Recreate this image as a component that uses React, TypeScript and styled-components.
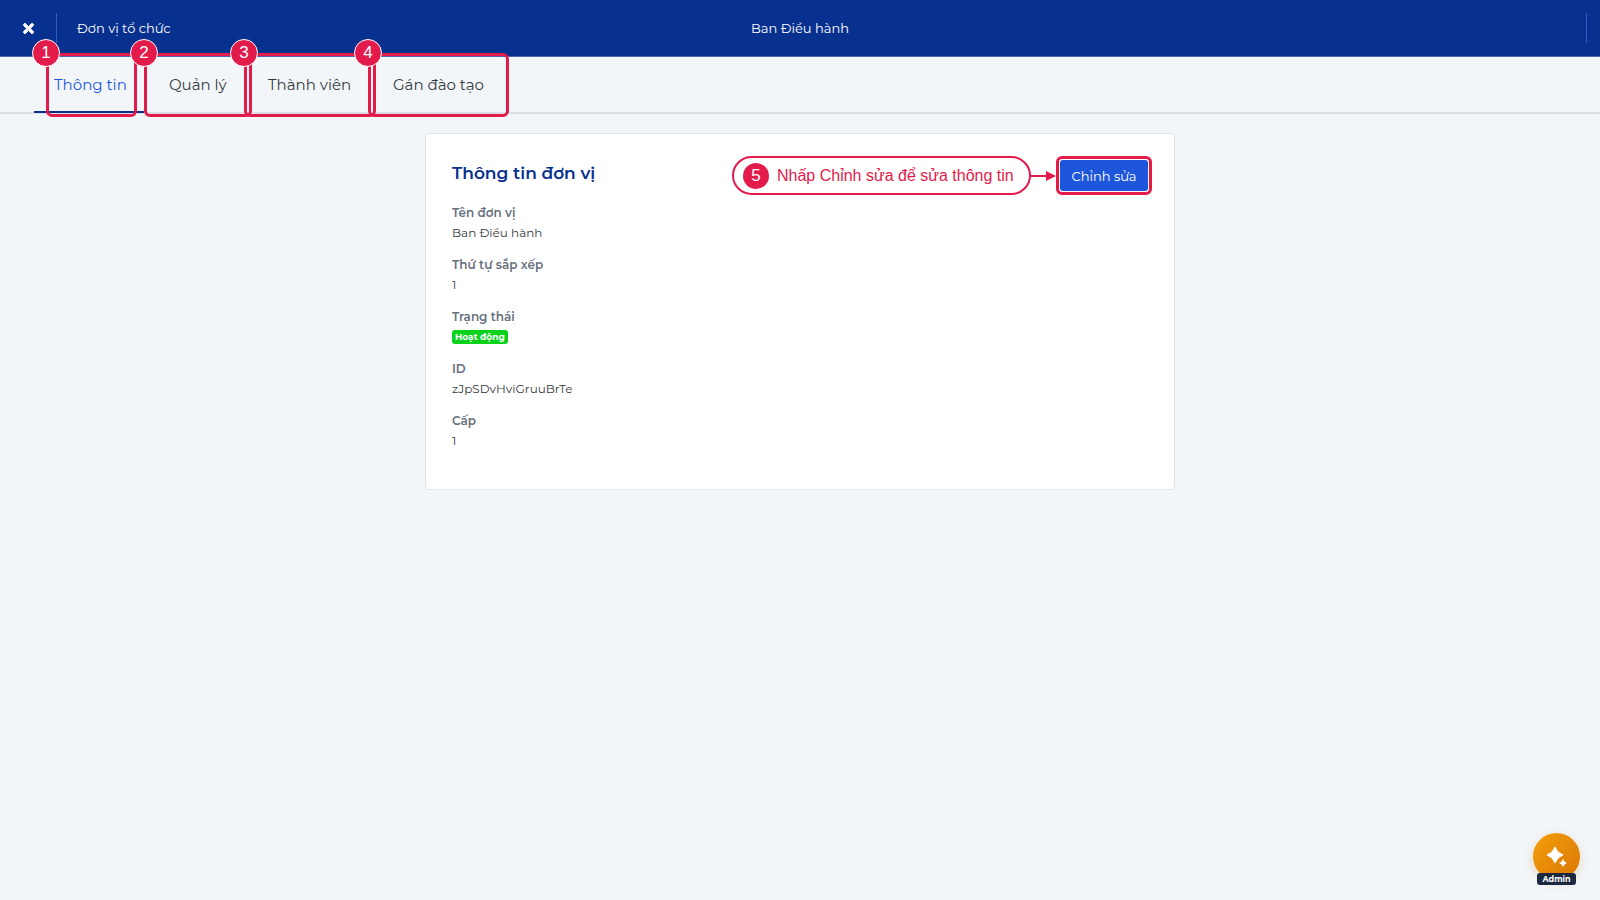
import React from "react";
import styled, { createGlobalStyle } from "styled-components";
import { FaTimes } from "react-icons/fa";

const GlobalStyle = createGlobalStyle`
  *, *::before, *::after { box-sizing: border-box; }
  body {
    margin: 0;
    background: #f2f6f9;
    color: #343a40;
    font-family: Montserrat, Inter, "Noto Sans", sans-serif;
    font-size: 13px;
  }
  button { font-family: inherit; }
`;

const accent = "#e31b4b";

const Header = styled.header`
  display: grid;
  grid-template-columns: 1fr auto 1fr;
  align-items: center;
  height: 57px;
  padding: 0 13px;
  background: #08308e;
  border-bottom: 1px solid #4a67ad;
  color: #ffffff;
  font-size: 13px;
  line-height: 20px;
`;

const HeaderStart = styled.div`
  display: flex;
  align-items: center;
  padding-left: 8px;
`;

const Divider = styled.span`
  width: 1px;
  height: 30px;
  background: #2f5bc8;
`;

const EndDivider = styled(Divider)`
  justify-self: end;
`;

const CloseButton = styled.button`
  display: flex;
  width: 35px;
  padding: 0;
  border: 0;
  background: none;
  color: inherit;
  cursor: pointer;
  svg { display: block; stroke: currentColor; stroke-width: 30px; }
`;

const SectionName = styled.span`
  margin-left: 20px;
`;

const PageName = styled.h1`
  margin: 0;
  font-size: 13px;
  font-weight: 400;
`;

const Tabs = styled.nav`
  display: flex;
  gap: 5px;
  height: 57px;
  padding: 0 34px;
  border-bottom: 2px solid #dbe0e7;
`;

const TabSlot = styled.div<{ $width: number }>`
  position: relative;
  display: flex;
  flex: 0 0 ${(p) => p.$width}px;
`;

const Tab = styled.button<{ $active?: boolean }>`
  flex: 1;
  height: 56px;
  padding: 2px 10px 0 20px;
  border: 0;
  border-bottom: 2px solid ${(p) => (p.$active ? "#08308e" : "transparent")};
  background: none;
  color: ${(p) => (p.$active ? "#1d56db" : "#343a40")};
  font-size: 15px;
  line-height: 24px;
  text-align: left;
  white-space: nowrap;
  cursor: pointer;
`;

const Highlight = styled.span<{ $left: number; $width: number }>`
  position: absolute;
  z-index: 1;
  top: -4px;
  left: ${(p) => p.$left}px;
  width: ${(p) => p.$width}px;
  height: 64px;
  border: 3px solid ${accent};
  border-radius: 6px;
  pointer-events: none;
`;

const StepNumber = styled.span`
  display: flex;
  align-items: center;
  justify-content: center;
  flex: none;
  width: 26px;
  height: 26px;
  border-radius: 50%;
  background: ${accent};
  color: #ffffff;
  font-family: "Liberation Sans", Arial, sans-serif;
  font-size: 17px;
  line-height: 26px;
`;

const CornerStep = styled(StepNumber)<{ $left: number }>`
  position: absolute;
  z-index: 2;
  top: -18px;
  left: ${(p) => p.$left - 14}px;
  width: 28px;
  height: 28px;
  border: 1px solid #ffffff;
`;

const Content = styled.main`
  padding: 19px 20px;
`;

const Card = styled.section`
  max-width: 750px;
  margin: 0 auto;
  padding: 22px 22px 26px 26px;
  border: 1px solid #e1e5ea;
  border-radius: 4px;
  background: #ffffff;
`;

const CardHead = styled.div`
  display: flex;
  align-items: flex-start;
  justify-content: space-between;
`;

const CardTitle = styled.h2`
  margin: 4px 0 0;
  color: #08308e;
  font-size: 17px;
  font-weight: 600;
  line-height: 26px;
`;

const EditArea = styled.div`
  display: flex;
  align-items: center;
`;

const Hint = styled.span`
  display: flex;
  align-items: center;
  gap: 8px;
  width: 299px;
  height: 39px;
  padding: 0 9px;
  border: 2px solid ${accent};
  border-radius: 20px;
  color: ${accent};
  font-family: "Liberation Sans", Arial, sans-serif;
  font-size: 16px;
  white-space: nowrap;
`;

const Arrow = styled.svg`
  display: block;
  width: 25px;
  height: 12px;
  fill: ${accent};
`;

const EditFrame = styled.span`
  display: flex;
  padding: 1px;
  border: 3px solid ${accent};
  border-radius: 6px;
`;

const EditButton = styled.button`
  width: 88px;
  height: 31px;
  padding: 0;
  border: 0;
  border-radius: 3px;
  background: #1d56db;
  color: #ffffff;
  font-size: 13px;
  cursor: pointer;
`;

const Details = styled.dl`
  margin: 8px 0 0;
`;

const Field = styled.div`
  margin-bottom: 12px;
  line-height: 20px;
`;

const Label = styled.dt`
  color: #66717d;
  font-size: 12px;
  font-weight: 600;
`;

const Value = styled.dd`
  display: flex;
  align-items: center;
  height: 20px;
  margin: 0;
  font-size: 12px;
`;

const Status = styled.span`
  padding: 0 3px;
  border-radius: 3px;
  background: #08d31a;
  color: #ffffff;
  font-size: 9px;
  font-weight: 700;
  line-height: 14px;
`;

const Assistant = styled.button`
  position: fixed;
  right: 20px;
  bottom: 20px;
  display: flex;
  align-items: center;
  justify-content: center;
  width: 47px;
  height: 47px;
  padding: 0;
  border: 0;
  border-radius: 50%;
  background: linear-gradient(135deg, #f59e0b, #d97706);
  box-shadow: 0 3px 10px rgba(217, 119, 6, 0.25);
  cursor: pointer;
`;

const AssistantTag = styled.span`
  position: absolute;
  bottom: -5px;
  left: 4px;
  width: 39px;
  border-radius: 3px;
  background: #1b2840;
  color: #ffffff;
  font-size: 8px;
  font-weight: 700;
  line-height: 12px;
`;

const tabs = [
  { label: "Thông tin", width: 110, mark: 12, markWidth: 91 },
  { label: "Quản lý", width: 94, mark: -5, markWidth: 108 },
  { label: "Thành viên", width: 120, mark: -4, markWidth: 132 },
  { label: "Gán đào tạo", width: 131, mark: -5, markWidth: 141 },
];

const fields = [
  { label: "Tên đơn vị", value: "Ban Điều hành" },
  { label: "Thứ tự sắp xếp", value: "1" },
  { label: "Trạng thái", value: <Status>Hoạt động</Status> },
  { label: "ID", value: "zJpSDvHviGruuBrTe" },
  { label: "Cấp", value: "1" },
];

export default function App() {
  return (
    <>
      <GlobalStyle />
      <Header>
        <HeaderStart>
          <CloseButton aria-label="Đóng"><FaTimes size={15} /></CloseButton>
          <Divider />
          <SectionName>Đơn vị tổ chức</SectionName>
        </HeaderStart>
        <PageName>Ban Điều hành</PageName>
        <EndDivider />
      </Header>
      <Tabs>
        {tabs.map((tab, i) => (
          <TabSlot key={tab.label} $width={tab.width}>
            <Tab $active={i === 0}>{tab.label}</Tab>
            <Highlight $left={tab.mark} $width={tab.markWidth} />
            <CornerStep $left={tab.mark}>{i + 1}</CornerStep>
          </TabSlot>
        ))}
      </Tabs>
      <Content>
        <Card>
          <CardHead>
            <CardTitle>Thông tin đơn vị</CardTitle>
            <EditArea>
              <Hint><StepNumber>5</StepNumber>Nhấp Chỉnh sửa để sửa thông tin</Hint>
              <Arrow viewBox="0 0 25 12"><path d="M0 5h15V1l10 5-10 5V7H0z" /></Arrow>
              <EditFrame><EditButton>Chỉnh sửa</EditButton></EditFrame>
            </EditArea>
          </CardHead>
          <Details>
            {fields.map((field) => (
              <Field key={field.label}>
                <Label>{field.label}</Label>
                <Value>{field.value}</Value>
              </Field>
            ))}
          </Details>
        </Card>
      </Content>
      <Assistant>
        <svg width="22" height="22" viewBox="0 0 22 22" fill="#ffffff">
          <path d="M9 1Q11 7 17 9Q11 11 9 17Q7 11 1 9Q7 7 9 1z" stroke="#ffffff" strokeLinejoin="round" />
          <path d="M17 13Q18 16 21 17Q18 18 17 21Q16 18 13 17Q16 16 17 13z" />
        </svg>
        <AssistantTag>Admin</AssistantTag>
      </Assistant>
    </>
  );
}
